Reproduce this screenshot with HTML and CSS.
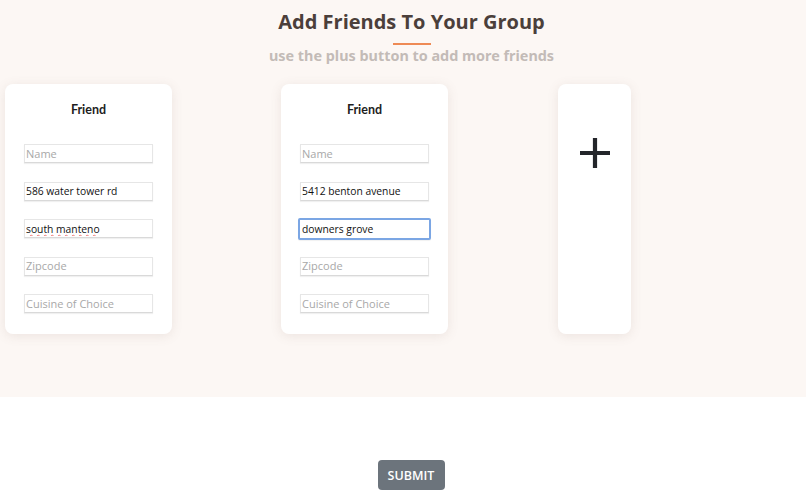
FILE: index.html
```html
<!DOCTYPE html>
<html>
<head>
<meta charset="utf-8">
<link rel="stylesheet" href="styles.css">
</head>
<body>
<section class="hero">
  <header class="heading">
    <h1 class="title">Add Friends To Your Group</h1>
    <div class="rule"></div>
    <p class="subtitle">use the plus button to add more friends</p>
  </header>
  <div class="cards">
    <div class="card">
      <h2 class="card-title">Friend</h2>
      <input class="field" type="text" placeholder="Name">
      <input class="field" type="text" value="586 water tower rd">
      <input class="field misspelled" type="text" value="south manteno">
      <input class="field" type="text" placeholder="Zipcode">
      <input class="field" type="text" placeholder="Cuisine of Choice">
    </div>
    <div class="card">
      <h2 class="card-title">Friend</h2>
      <input class="field" type="text" placeholder="Name">
      <input class="field" type="text" value="5412 benton avenue">
      <input class="field focused" type="text" value="downers grove">
      <input class="field" type="text" placeholder="Zipcode">
      <input class="field" type="text" placeholder="Cuisine of Choice">
    </div>
    <div class="card add-card">
      <svg class="plus" width="32" height="32" viewBox="0 0 32 32">
        <path d="M16 1V31M1 16H31" stroke="#23252a" stroke-width="4.2" fill="none"/>
      </svg>
    </div>
  </div>
</section>
<div class="actions">
  <button class="submit">SUBMIT</button>
</div>
</body>
</html>
```

FILE: styles.css
```css
* { box-sizing: border-box; }
html, body { margin: 0; padding: 0; background: #fff; }
body { font-family: "Open Sans", "Noto Sans", sans-serif; }

.hero {
  background: #fcf7f4;
  height: 397px;
  padding-top: 7px;
}
.heading {
  padding-left: 17px;
}
.title {
  margin: 0;
  text-align: center;
  font-family: "Open Sans", sans-serif;
  font-weight: 700;
  font-size: 20px;
  line-height: 30px;
  color: #4b3f3b;
}
.rule {
  width: 38px;
  height: 2px;
  background: #ee8a55;
  margin: 6px auto 0;
}
.subtitle {
  margin: 1px 0 0;
  text-align: center;
  font-family: "Noto Sans", sans-serif;
  font-weight: 700;
  font-size: 14.4px;
  line-height: 20px;
  color: #c3bbb7;
}
.cards {
  display: flex;
  gap: 109px;
  padding-left: 5px;
  margin-top: 18px;
}
.card {
  width: 167px;
  height: 250px;
  background: #fff;
  border-radius: 8px;
  box-shadow: 0 2px 12px rgba(120, 90, 80, 0.12);
  display: flex;
  flex-direction: column;
  align-items: center;
  padding-top: 17px;
}
.card-title {
  margin: 0 0 25px;
  font-family: "Lato", sans-serif;
  font-weight: 700;
  font-size: 12.5px;
  line-height: 18px;
  color: #1e1e1e;
}
.field {
  width: 129px;
  height: 19px;
  margin: 0 0 18.6px;
  padding: 0 1px;
  border: 1px solid #e6e6e6;
  border-bottom-color: #d9d9d9;
  box-shadow: 0 1px 1px rgba(0,0,0,0.06);
  font-family: "Open Sans", sans-serif;
  font-style: normal;
  font-size: 10.3px;
  color: #111;
  background: #fff;
  outline: none;
}
.field::placeholder {
  color: #a8a8a8;
  font-family: "Open Sans", sans-serif;
  font-style: normal;
  font-size: 11px;
}
.misspelled { text-decoration: underline wavy #e77; text-decoration-thickness: 1px; }
.focused {
  width: 133px;
  height: 22px;
  margin: -1.5px 0 17px;
  padding: 0 2px;
  border: 2px solid #7ba6e4;
  border-radius: 2px;
}
.add-card {
  width: 73px;
  padding-top: 53px;
  margin-left: 1px;
}
.actions {
  display: flex;
  justify-content: center;
  padding-top: 63px;
  padding-left: 16px;
}
.submit {
  width: 67px;
  height: 30px;
  border: none;
  border-radius: 4px;
  background: #6c747c;
  color: #fff;
  font-family: "Open Sans", sans-serif;
  font-weight: 600;
  font-size: 12.5px;
  padding: 0;
}
```
